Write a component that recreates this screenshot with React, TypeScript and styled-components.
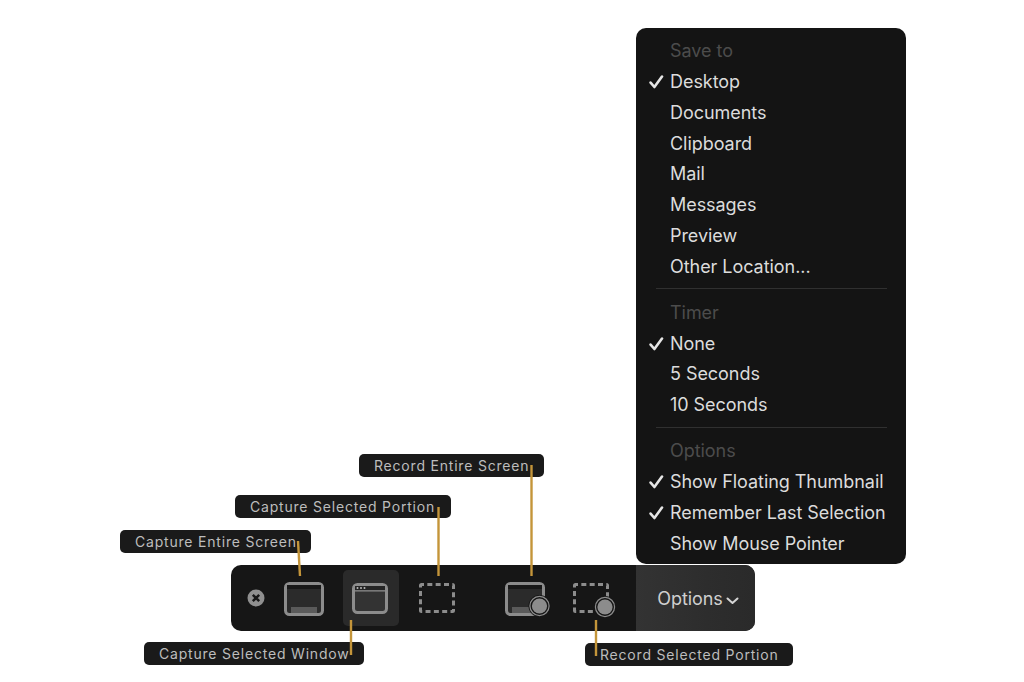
import React from "react";
import styled, { createGlobalStyle } from "styled-components";

const Global = createGlobalStyle`
  html, body { margin: 0; padding: 0; background: #fff; }
  body { font-family: Inter, "Liberation Sans", sans-serif; }
`;

const Canvas = styled.div`
  position: relative;
  width: 1024px;
  height: 682px;
  overflow: hidden;
  background: #fff;
`;

const Menu = styled.div`
  position: absolute;
  left: 636px;
  top: 28px;
  width: 270px;
  height: 536px;
  box-sizing: border-box;
  padding: 8.3px 0 0;
  background: #141414;
  border-radius: 10px;
  font-size: 18px;
  color: #dcdcdc;
`;

const Row = styled.div<{ $head?: boolean }>`
  position: relative;
  height: 30.75px;
  line-height: 30.75px;
  padding-left: 34px;
  white-space: nowrap;
  letter-spacing: -0.05px;
  color: ${(p) => (p.$head ? "#4c4c4c" : "#dcdcdc")};
`;

const Check = styled.svg`
  position: absolute;
  left: 13px;
  top: 8px;
  width: 15px;
  height: 14px;
`;

const Separator = styled.div`
  height: 1px;
  margin: 6px 19px 8.5px 20px;
  background: #303030;
`;

const Toolbar = styled.div`
  position: absolute;
  left: 231px;
  top: 565px;
  width: 524px;
  height: 66px;
  display: flex;
  align-items: center;
  background: #161616;
  border-radius: 10px;
  overflow: hidden;
`;

const CloseBtn = styled.svg`
  width: 18px;
  height: 18px;
  margin-left: 16px;
  flex: none;
`;

const Tool = styled.div<{ $active?: boolean; $gap: number }>`
  width: 56px;
  height: 56px;
  flex: none;
  margin-left: ${(p) => p.$gap}px;
  border-radius: 5px;
  background: ${(p) => (p.$active ? "#2a2a2a" : "transparent")};
  svg { display: block; width: 56px; height: 56px; }
`;

const OptionsBtn = styled.div`
  margin-left: auto;
  width: 119px;
  height: 100%;
  flex: none;
  display: flex;
  align-items: center;
  justify-content: center;
  gap: 3px;
  padding-left: 5px;
  box-sizing: border-box;
  background: linear-gradient(90deg, #333333 0%, #2d2d2d 60%, #2a2a2a 100%);
  color: #cfcfcf;
  font-size: 18px;
  letter-spacing: -0.1px;
`;

const Chevron = styled.svg`
  width: 13px;
  height: 8px;
  margin-top: 5px;
`;

const Label = styled.div<{ $x: number; $y: number; $w: number }>`
  position: absolute;
  left: ${(p) => p.$x}px;
  top: ${(p) => p.$y}px;
  width: ${(p) => p.$w}px;
  height: 23px;
  box-sizing: border-box;
  padding-left: 15px;
  line-height: 23px;
  border-radius: 5px;
  background: #1a1a1a;
  color: #bdbdbd;
  font-size: 14px;
  letter-spacing: 0.8px;
  white-space: nowrap;
`;

const Leader = styled.svg`
  position: absolute;
  left: 0;
  top: 0;
  width: 1024px;
  height: 682px;
  pointer-events: none;
`;

const G = "#8c8c8c";

const RecordDot = ({ cx, cy }: { cx: number; cy: number }) => (
  <>
    <circle cx={cx} cy={cy} r="11" fill="#161616" />
    <circle cx={cx} cy={cy} r="9.6" fill="none" stroke="#8c8c8c" strokeWidth="1.2" />
    <circle cx={cx} cy={cy} r="7.6" fill="#8c8c8c" />
  </>
);

const ScreenIcon = ({ record }: { record?: boolean }) => (
  <svg viewBox="0 0 56 56">
    <rect x="10.5" y="13.5" width="37" height="31" rx="4" fill="#2b2b2b" stroke={G} strokeWidth="3" />
    <rect x="12" y="15" width="34" height="4" fill="#181818" />
    <rect x="16" y="37" width="26" height="6" fill="#5a5a5a" />
    {record && <RecordDot cx={43.5} cy={36} />}
  </svg>
);

const WindowIcon = () => (
  <svg viewBox="0 0 56 56">
    <rect x="10.5" y="14.5" width="33" height="28" rx="4" fill="#333" stroke={G} strokeWidth="3" />
    <rect x="12" y="16" width="30" height="4.5" fill="#242424" />
    <rect x="12" y="20.2" width="30" height="1.3" fill={G} />
    <circle cx="14.5" cy="18" r="1" fill="#bbb" />
    <circle cx="18" cy="18" r="1" fill="#bbb" />
    <circle cx="21.5" cy="18" r="1" fill="#bbb" />
  </svg>
);

const Dashes = () => (
  <rect
    x="10.5"
    y="14.5"
    width="33"
    height="27"
    rx="1"
    fill="none"
    stroke={G}
    strokeWidth="3"
    strokeDasharray="5 3.33"
    strokeDashoffset="2.5"
  />
);

const DashIcon = ({ record }: { record?: boolean }) => (
  <svg viewBox="0 0 56 56">
    <Dashes />
    {record && <RecordDot cx={41} cy={37} />}
  </svg>
);

const CheckMark = () => (
  <Check viewBox="0 0 15 14">
    <path d="M1.6 7.6 L5.4 12 L13 1.6" fill="none" stroke="#e6e6e6" strokeWidth="2.6" strokeLinecap="round" strokeLinejoin="round" />
  </Check>
);

const groups: { head: string; items: { t: string; c?: boolean }[] }[] = [
  {
    head: "Save to",
    items: [
      { t: "Desktop", c: true },
      { t: "Documents" },
      { t: "Clipboard" },
      { t: "Mail" },
      { t: "Messages" },
      { t: "Preview" },
      { t: "Other Location..." },
    ],
  },
  { head: "Timer", items: [{ t: "None", c: true }, { t: "5 Seconds" }, { t: "10 Seconds" }] },
  {
    head: "Options",
    items: [
      { t: "Show Floating Thumbnail", c: true },
      { t: "Remember Last Selection", c: true },
      { t: "Show Mouse Pointer" },
    ],
  },
];

const labels = [
  { t: "Record Entire Screen", x: 359, y: 454, w: 185 },
  { t: "Capture Selected Portion", x: 235, y: 495, w: 216 },
  { t: "Capture Entire Screen", x: 120, y: 530, w: 191 },
  { t: "Capture Selected Window", x: 144, y: 642, w: 220 },
  { t: "Record Selected Portion", x: 585, y: 643, w: 208 },
];

const lines = [
  [298, 541, 300, 576],
  [438.5, 507, 438.5, 576],
  [531.5, 465, 531.5, 576],
  [351, 620, 351, 655],
  [596, 620, 596, 656],
];

export default function App() {
  return (
    <Canvas>
      <Global />
      <Menu>
        {groups.map((g, i) => (
          <React.Fragment key={g.head}>
            {i > 0 && <Separator />}
            <Row $head>{g.head}</Row>
            {g.items.map((it) => (
              <Row key={it.t}>
                {it.c && <CheckMark />}
                {it.t}
              </Row>
            ))}
          </React.Fragment>
        ))}
      </Menu>
      <Toolbar>
        <CloseBtn viewBox="0 0 18 18">
          <circle cx="9" cy="9" r="8.5" fill="#8f8f8f" />
          <path d="M5.8 5.8 L12.2 12.2 M12.2 5.8 L5.8 12.2" stroke="#161616" strokeWidth="2.4" />
        </CloseBtn>
        <Tool $gap={10}><ScreenIcon /></Tool>
        <Tool $gap={12} $active><WindowIcon /></Tool>
        <Tool $gap={11}><DashIcon /></Tool>
        <Tool $gap={30}><ScreenIcon record /></Tool>
        <Tool $gap={12}><DashIcon record /></Tool>
        <OptionsBtn>
          Options
          <Chevron viewBox="0 0 13 8">
            <path d="M1.5 1.5 L6.5 6 L11.5 1.5" fill="none" stroke="#d4d4d4" strokeWidth="2" strokeLinecap="round" strokeLinejoin="round" />
          </Chevron>
        </OptionsBtn>
      </Toolbar>
      {labels.map((l) => (
        <Label key={l.t} $x={l.x} $y={l.y} $w={l.w}>{l.t}</Label>
      ))}
      <Leader viewBox="0 0 1024 682">
        {lines.map((l, i) => (
          <line key={i} x1={l[0]} y1={l[1]} x2={l[2]} y2={l[3]} stroke="#c4953a" strokeWidth="2.4" />
        ))}
      </Leader>
    </Canvas>
  );
}
